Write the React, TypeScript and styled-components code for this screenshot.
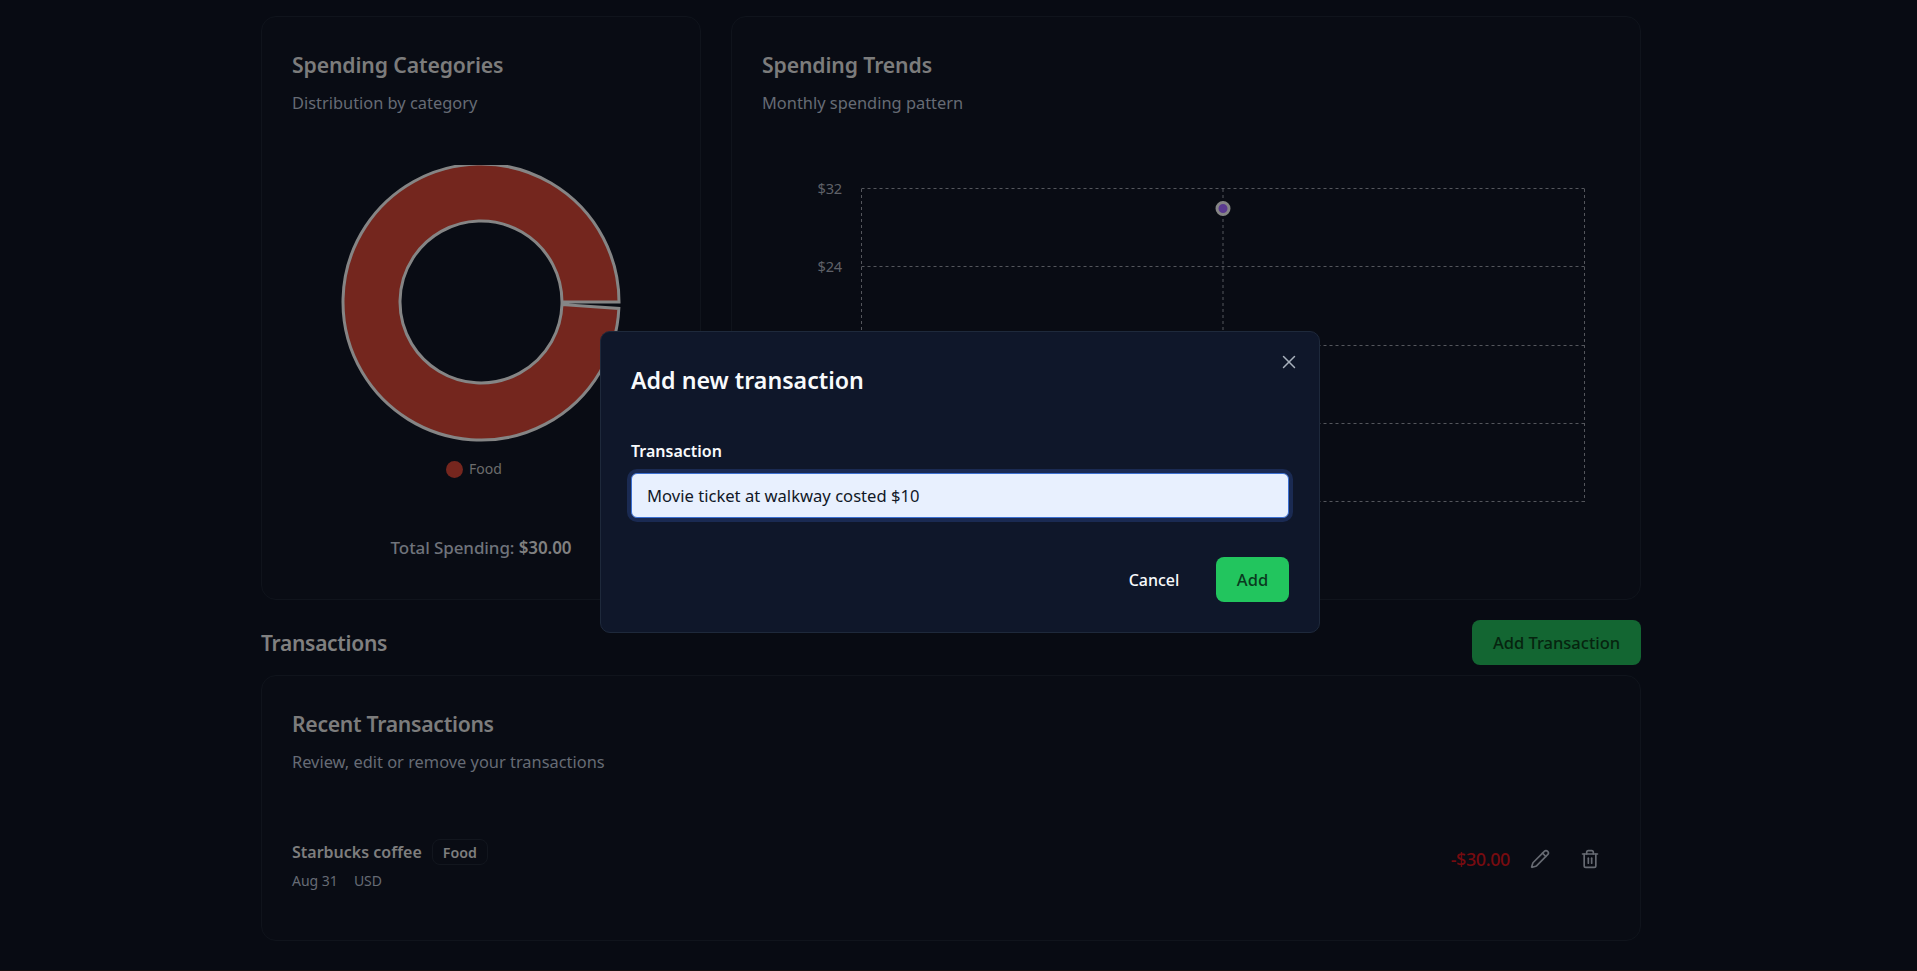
import React from "react";
import styled, { createGlobalStyle } from "styled-components";
import { Pencil, Trash2, X } from "lucide-react";

const Global = createGlobalStyle`
  html, body { margin: 0; height: 971px; overflow: hidden; background: #080b13; }
  body { font-family: "Noto Sans", "Open Sans", Arial, sans-serif; color: #808080; }
  * { box-sizing: border-box; }
`;

const Page = styled.div`
  width: 1917px;
  height: 971px;
  padding: 16px 0 0 261px;
  overflow: hidden;
  background: #080b13;
  border-bottom: 1px solid #161011;
`;
const Content = styled.main`
  width: 1380px;
  display: flex;
  flex-direction: column;
`;
const ChartGrid = styled.section`
  display: grid;
  grid-template-columns: 440px 910px;
  gap: 30px;
  height: 584px;
`;
const Card = styled.article`
  background: #090c14;
  border: 1px solid #10141c;
  border-radius: 15px;
  padding: 30px;
  display: flex;
  flex-direction: column;
`;
const CardTitle = styled.h2`
  margin: 0;
  font-size: 21.2px;
  line-height: 36px;
  font-weight: 600;
  color: #7c7c7c;
  letter-spacing: -0.12px;
`;
const TightCardTitle = styled(CardTitle)`
  letter-spacing: -0.3px;
`;
const CardSub = styled.p`
  margin: 8px 0 0;
  font-size: 16.4px;
  line-height: 24px;
  color: #666b75;
`;
const DonutWrap = styled.div`
  margin-top: 50px;
  height: 277px;
  display: flex;
  justify-content: center;
`;
const Legend = styled.div`
  margin-top: 17px;
  padding-right: 14px;
  display: flex;
  justify-content: center;
  align-items: center;
  gap: 6px;
  font-size: 14px;
  line-height: 20px;
  color: #6c6c6c;
`;
const LegendDot = styled.span`
  width: 17px;
  height: 17px;
  border-radius: 50%;
  background: #75261e;
`;
const Total = styled.p`
  margin: 57px 0 0;
  text-align: center;
  font-size: 17px;
  line-height: 24px;
  font-weight: 500;
  color: #6f737b;
  letter-spacing: -0.1px;
  b { font-weight: 600; color: #808080; }
`;
const ChartBox = styled.div`
  margin-top: 34px;
  height: 400px;
  margin-left: -31px;
`;
const HeaderRow = styled.header`
  display: flex;
  justify-content: space-between;
  align-items: center;
  margin-top: 20px;
  height: 45px;
`;
const SectionTitle = styled.h2`
  margin: 0;
  font-size: 21px;
  font-weight: 600;
  color: #808080;
  letter-spacing: -0.3px;
`;
const AddTransactionBtn = styled.button`
  width: 169px;
  height: 45px;
  border: 0;
  border-radius: 8px;
  background: #136632;
  color: #06240f;
  font: 500 16.5px "Noto Sans", sans-serif;
`;
const TxCard = styled(Card)`
  margin-top: 10px;
  height: 266px;
`;
const TxRow = styled.div`
  margin-top: 64px;
  display: flex;
  align-items: flex-start;
  justify-content: space-between;
`;
const TxInfo = styled.div`
  display: flex;
  flex-direction: column;
  gap: 6px;
  padding-top: 1px;
`;
const TxTop = styled.div`
  display: flex;
  align-items: center;
  gap: 10px;
`;
const TxName = styled.span`
  font-size: 16px;
  font-weight: 600;
  color: #7e7e7e;
`;
const Badge = styled.span`
  height: 26px;
  padding: 0 10px;
  display: flex;
  align-items: center;
  border: 1px solid #12161e;
  border-radius: 8px;
  font-size: 14.2px;
  font-weight: 600;
  color: #7e7e7e;
`;
const TxMeta = styled.div`
  display: flex;
  gap: 16px;
  font-size: 14px;
  line-height: 20px;
  color: #666b75;
`;
const TxActions = styled.div`
  display: flex;
  align-items: center;
  margin-top: 1px;
`;
const Amount = styled.span`
  font-size: 18px;
  font-weight: 500;
  color: #770b10;
  letter-spacing: -0.4px;
`;
const IconBtn = styled.span`
  width: 40px;
  height: 40px;
  margin-left: 10px;
  display: flex;
  align-items: center;
  justify-content: center;
  color: #666a72;
`;
const Overlay = styled.div`
  position: fixed;
  inset: 0;
`;
const Modal = styled.div`
  position: absolute;
  left: 600px;
  top: 331px;
  width: 720px;
  height: 302px;
  padding: 30px;
  background: #0f172a;
  border: 1px solid #1e293b;
  border-radius: 10px;
  display: flex;
  flex-direction: column;
`;
const ModalTitle = styled.h3`
  margin: 0;
  font-size: 23.2px;
  line-height: 37px;
  font-weight: 600;
  color: #f8fafc;
`;
const Close = styled.span`
  position: absolute;
  top: 19px;
  right: 19px;
  color: #a8b0bc;
  display: flex;
`;
const FieldLabel = styled.label`
  margin-top: 40px;
  font-size: 16px;
  line-height: 24px;
  font-weight: 600;
  color: #f8fafc;
`;
const Input = styled.input`
  margin-top: 10px;
  height: 45px;
  width: 100%;
  padding: 0 15px;
  border: 1px solid #3b6fd0;
  border-radius: 6px;
  outline: none;
  background: #e8f0fe;
  box-shadow: 0 0 0 4px #1a2a52;
  color: #111827;
  font: 400 16.6px "Noto Sans", sans-serif;
`;
const Actions = styled.div`
  margin-top: 39px;
  display: flex;
  justify-content: flex-end;
  align-items: center;
  gap: 10px;
`;
const CancelBtn = styled.button`
  height: 45px;
  width: 104px;
  border: 0;
  background: transparent;
  color: #f8fafc;
  font: 500 16px "Noto Sans", sans-serif;
`;
const AddBtn = styled.button`
  height: 45px;
  width: 73px;
  border: 0;
  border-radius: 8px;
  background: #22c55e;
  color: #0a3a1e;
  font: 500 16.5px "Noto Sans", sans-serif;
`;

const cx = 140, cy = 138, R = 138, r = 81;
const rad = (d: number) => (d * Math.PI) / 180;
const pt = (a: number, rr: number) =>
  `${(cx + rr * Math.cos(rad(a))).toFixed(2)} ${(cy + rr * Math.sin(rad(a))).toFixed(2)}`;
const donutPath =
  `M${pt(0, R)} A${R} ${R} 0 1 0 ${pt(2.7, R)} L${pt(1.8, r)} A${r} ${r} 0 1 1 ${pt(0, r)} Z`;

const Donut = () => (
  <svg width={280} height={277} viewBox="0 1 280 277">
    <path d={donutPath} fill="#74261e" stroke="#858585" strokeWidth={3} />
  </svg>
);

const grid = "#54565c";
const ys = [189, 267, 346, 424, 502];
const labels = ["$32", "$24"];
const TrendChart = () => (
  <svg width={910} height={400} viewBox="731 149 910 400">
    <g stroke={grid} strokeWidth={1} strokeDasharray="3 3" fill="none">
      {ys.map((y) => (
        <line key={y} x1={861.5} x2={1584.5} y1={y - 0.5} y2={y - 0.5} />
      ))}
      {[861.5, 1223, 1584.5].map((x) => (
        <line key={x} x1={x} x2={x} y1={189} y2={502} />
      ))}
    </g>
    {labels.map((label, i) => (
      <text key={label} x={842} y={ys[i] + 5} textAnchor="end" fontSize={14.6} fill="#5f6168" letterSpacing={-0.2}>
        {label}
      </text>
    ))}
    <circle cx={1223} cy={208.5} r={6} fill="#5a3a90" stroke="#858585" strokeWidth={3} />
  </svg>
);

export default function App() {
  return (
    <Page>
      <Global />
      <Content>
        <ChartGrid>
          <Card>
            <CardTitle>Spending Categories</CardTitle>
            <CardSub>Distribution by category</CardSub>
            <DonutWrap><Donut /></DonutWrap>
            <Legend><LegendDot />Food</Legend>
            <Total>Total Spending: <b>$30.00</b></Total>
          </Card>
          <Card>
            <CardTitle>Spending Trends</CardTitle>
            <CardSub>Monthly spending pattern</CardSub>
            <ChartBox><TrendChart /></ChartBox>
          </Card>
        </ChartGrid>
        <HeaderRow>
          <SectionTitle>Transactions</SectionTitle>
          <AddTransactionBtn>Add Transaction</AddTransactionBtn>
        </HeaderRow>
        <TxCard>
          <TightCardTitle>Recent Transactions</TightCardTitle>
          <CardSub>Review, edit or remove your transactions</CardSub>
          <TxRow>
            <TxInfo>
              <TxTop>
                <TxName>Starbucks coffee</TxName>
                <Badge>Food</Badge>
              </TxTop>
              <TxMeta><span>Aug 31</span><span>USD</span></TxMeta>
            </TxInfo>
            <TxActions>
              <Amount>-$30.00</Amount>
              <IconBtn><Pencil size={20} strokeWidth={2} /></IconBtn>
              <IconBtn><Trash2 size={20} strokeWidth={2} /></IconBtn>
            </TxActions>
          </TxRow>
        </TxCard>
      </Content>
      <Overlay>
        <Modal>
          <Close><X size={22} strokeWidth={1.6} /></Close>
          <ModalTitle>Add new transaction</ModalTitle>
          <FieldLabel>Transaction</FieldLabel>
          <Input readOnly value="Movie ticket at walkway costed $10" />
          <Actions>
            <CancelBtn>Cancel</CancelBtn>
            <AddBtn>Add</AddBtn>
          </Actions>
        </Modal>
      </Overlay>
    </Page>
  );
}
